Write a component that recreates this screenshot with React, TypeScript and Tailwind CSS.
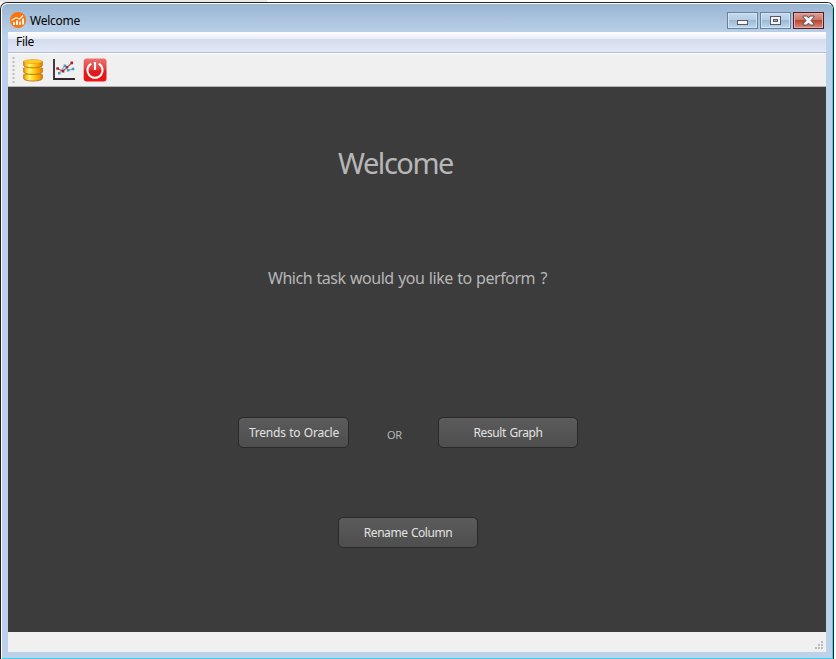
import React from "react";

function Caption({ kind }: { kind: "min" | "max" | "close" }) {
  const close = kind === "close";
  return (
    <svg width={31} height={17} viewBox="0 0 31 17" shapeRendering="crispEdges" className="block">
      <defs>
        <linearGradient id={"g" + kind} x1="0" y1="0" x2="0" y2="1">
          <stop offset="0" stopColor={close ? "#dc9b90" : "#c4d7eb"} />
          <stop offset=".46" stopColor={close ? "#cb7565" : "#b6cde5"} />
          <stop offset=".47" stopColor={close ? "#b8402c" : "#9ab7d3"} />
          <stop offset="1" stopColor={close ? "#d38273" : "#b9d3ea"} />
        </linearGradient>
      </defs>
      <rect x="0" y="0" width="31" height="17" rx="1" fill={close ? "#4e1c2a" : "#66809f"} />
      <rect x="1" y="1" width="29" height="15" fill={close ? "#e7aaa0" : "#d5e4f2"} />
      <rect x="2" y="2" width="27" height="13" fill={`url(#g${kind})`} />
      {kind === "min" && <><rect x="10" y="8" width="11" height="5" fill="#555968" /><rect x="11" y="9" width="9" height="3" fill="#f6f6f6" /></>}
      {kind === "max" && <><rect x="10" y="4" width="11" height="9" fill="#555968" /><rect x="11" y="5" width="9" height="7" fill="#f4f4f4" /><rect x="13" y="7" width="5" height="3" fill="#555968" /><rect x="14" y="8" width="3" height="1" fill="#9ab7d3" /></>}
      {close && <g shapeRendering="auto"><path d="M10 4h4l1.5 2L17 4h4v1l-3 3.5 3 3.5v1h-4l-1.5-2-1.5 2h-4v-1l3-3.5L10 5z" fill="#f4f4f4" stroke="#565462" strokeWidth="1" /></g>}
    </svg>
  );
}

function AppIcon() {
  return (
    <svg width="16" height="16" viewBox="0 0 16 16">
      <circle cx="8" cy="8" r="8" fill="#fb750c" />
      <path d="M4 13V10M7 13V8.5M10 13V9.5M13 12.5V6.5" stroke="#fff" strokeWidth="1.8" />
      <path d="M1.5 8.5l4.5-3 3.5 1.5L13 3.5" fill="none" stroke="#fff" strokeWidth="1.1" />
    </svg>
  );
}

function Database() {
  return (
    <svg width="20" height="23" viewBox="0 0 20 23">
      <defs>
        <linearGradient id="gold">
          <stop offset="0" stopColor="#f09a00" /><stop offset=".3" stopColor="#fff763" />
          <stop offset=".6" stopColor="#ffc60e" /><stop offset="1" stopColor="#e87f00" />
        </linearGradient>
      </defs>
      {[14.6, 8, 1.4].map((y) => (
        <g key={y}>
          <path d={`M.7 ${y + 1}v4c0 3.2 18.6 3.2 18.6 0v-4z`} fill="url(#gold)" stroke="#b5650a" strokeWidth=".8" />
          <path d={`M.9 ${y + 1}c0 3 18.2 3 18.2 0`} fill="url(#gold)" />
        </g>
      ))}
      <ellipse cx="10" cy="2.5" rx="9.1" ry="2" fill="#ffc928" stroke="#dc9310" strokeWidth=".5" />
    </svg>
  );
}

function Chart() {
  return (
    <svg width="22" height="22" viewBox="0 0 22 22">
      <path d="M1 0v20H22" fill="none" stroke="#30282d" strokeWidth="1.8" />
      <path d="M6 14.5L12 6.7l3 4.6L20 10" fill="none" stroke="#6fb3d0" strokeWidth="1.2" />
      <path d="M4.5 9.5l5.5 2.7 4-4L18.8 4" fill="none" stroke="#bd5660" strokeWidth="1.2" />
      <path d="M3.3 8.2h2.6v2.6H3.3zM8.7 10.8h2.6v2.6H8.7zM13 7h2.3v2.3H13zM17.5 2.6h2.6v2.6h-2.6z" fill="#a91f2c" />
      <path d="M5 13h2.5v2.5H5zM10.6 5.4h2.6V8h-2.6zM13.8 10h2.6v2.6h-2.6zM18.7 8.7h2.6v2.6h-2.6z" fill="#449bc0" />
    </svg>
  );
}

function Power() {
  return (
    <svg width="24" height="24" viewBox="0 0 24 24">
      <defs>
        <linearGradient id="red" x1="0" y1="0" x2="0" y2="1">
          <stop offset="0" stopColor="#ec7371" /><stop offset=".45" stopColor="#e43c3c" /><stop offset=".55" stopColor="#dc1c1c" /><stop offset="1" stopColor="#ee1414" />
        </linearGradient>
      </defs>
      <rect x=".7" y=".5" width="22.8" height="23" rx="3" fill="url(#red)" />
      <path d="M8.2 5.6a7.6 7.6 0 1 0 7.6 0" fill="none" stroke="#fff" strokeWidth="2.1" />
      <path d="M12 4v8" stroke="#fff" strokeWidth="2.2" />
    </svg>
  );
}

function Button({ label, className }: { label: string; className: string }) {
  return (
    <button className={`flex h-[31px] items-center justify-center rounded-[5px] border border-[#292929] bg-linear-to-b from-[#5b5b5b] to-[#4e4e4e] text-[12px] leading-[16px] text-[#e3e3e3] ${className}`}>
      {label}
    </button>
  );
}

export default function App() {
  return (
    <div className="h-[659px] w-[836px] overflow-hidden bg-white font-['Noto_Sans',sans-serif] whitespace-nowrap">
      <div className="h-[2px] w-[267px] bg-[#e9e9e9]" />
      <div className="h-[657px] w-[834px] rounded-t-[7px] border-t border-r border-l border-[#202428] bg-white pl-px">
        <div className="flex h-[656px] flex-col rounded-t-[6px] border-t border-r border-b border-t-white border-r-[#35d5ee] border-b-[#35d5ee] bg-linear-to-b from-[#9bb6d3] to-[#bcd2ea] to-[32px] pr-[6px] pb-[6px] pl-[6px]">
          <header className="flex h-7 shrink-0 items-start">
            <div className="mt-[8px] ml-[2px]"><AppIcon /></div>
            <span className="mt-[9px] ml-[4px] text-[12px] leading-[16px] tracking-[-0.25px] text-black">Welcome</span>
            <div className="mt-[8px] mr-[2px] ml-auto flex gap-[2px]"><Caption kind="min" /><Caption kind="max" /><Caption kind="close" /></div>
          </header>
          <nav className="h-[21px] shrink-0 border-b border-[#b4bdd2] bg-[linear-gradient(to_bottom,#ffffff_0px,#e9edf4_7px,#d4dbed_7px,#e2e8f6_20px)] pl-[8px] text-[12px] leading-[20px] tracking-[-0.3px] text-black">File</nav>
          <div className="flex h-[34px] shrink-0 items-start border-t border-b border-t-white border-b-[#b3b3b3] bg-[#f0f0f0] pl-[4px]">
            <svg width="3" height="29" className="mt-[3px]"><path d="M1.5 0v28" stroke="#bdbdbd" strokeWidth="2" strokeDasharray="2 2" /></svg>
            <div className="mt-[5px] ml-[8px]"><Database /></div>
            <div className="mt-[5px] ml-[10px]"><Chart /></div>
            <div className="mt-[4px] ml-[8px]"><Power /></div>
          </div>
          <main className="h-[545px] shrink-0 bg-[#3c3c3c] text-[#b7b7b7]">
            <h1 className="pt-[57px] pl-[330px] text-[29px] leading-[38px] tracking-[-1.45px]">Welcome</h1>
            <p className="pt-[84px] pl-[260px] text-[16px] leading-[24px] tracking-[-0.47px] [word-spacing:0.7px]">Which task would you like to perform<span className="pl-[1px]"> ?</span></p>
            <div className="flex pt-[127px] pl-[230px]">
              <Button label="Trends to Oracle" className="w-[111px] pl-px tracking-[-0.2px] [word-spacing:0.5px]" />
              <span className="mt-[11px] ml-[38px] w-[51px] text-[11px] leading-[14px] tracking-[-0.3px]">OR</span>
              <Button label="Result Graph" className="w-[140px] tracking-[-0.38px] [word-spacing:0.8px]" />
            </div>
            <div className="pt-[69px] pl-[330px]"><Button label="Rename Column" className="w-[140px] tracking-[-0.46px] [word-spacing:0.8px]" /></div>
          </main>
          <footer className="flex h-[20px] shrink-0 items-end justify-end bg-[#f0f0f0] pr-[2px] pb-[2px]">
            <svg width="9" height="9" fill="#bcbcbc"><path d="M6 0h2v2H6zM3 3h2v2H3zM6 3h2v2H6zM0 6h2v2H0zM3 6h2v2H3zM6 6h2v2H6z" /></svg>
          </footer>
        </div>
      </div>
    </div>
  );
}
